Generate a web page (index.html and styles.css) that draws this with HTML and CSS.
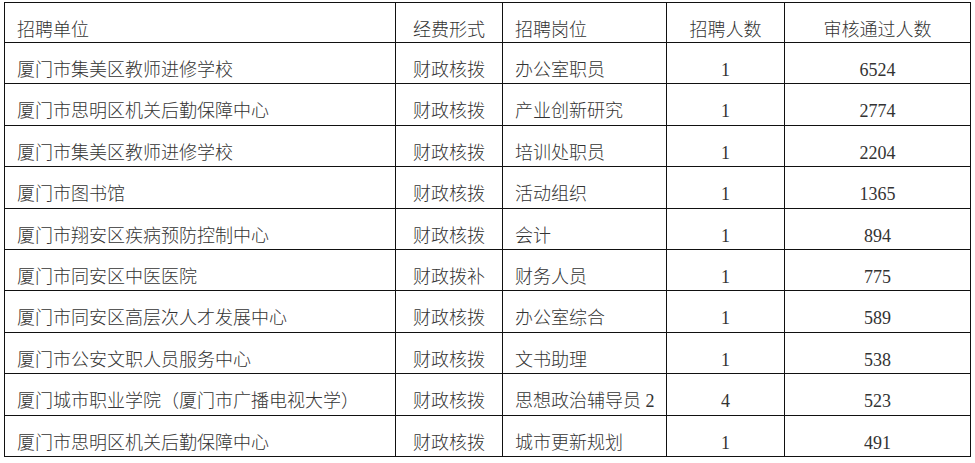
FILE: index.html
```html
<!DOCTYPE html>
<html lang="zh-CN">
<head>
<meta charset="utf-8">
<title>招聘单位</title>
<link rel="stylesheet" href="styles.css">
</head>
<body>
<table class="grid">
  <colgroup>
    <col class="c-unit">
    <col class="c-fund">
    <col class="c-post">
    <col class="c-num">
    <col class="c-pass">
  </colgroup>
  <thead>
    <tr>
      <th class="left">招聘单位</th>
      <th class="center">经费形式</th>
      <th class="left">招聘岗位</th>
      <th class="center">招聘人数</th>
      <th class="center">审核通过人数</th>
    </tr>
  </thead>
  <tbody>
    <tr><td class="left">厦门市集美区教师进修学校</td><td class="center">财政核拨</td><td class="left">办公室职员</td><td class="center">1</td><td class="center">6524</td></tr>
    <tr><td class="left">厦门市思明区机关后勤保障中心</td><td class="center">财政核拨</td><td class="left">产业创新研究</td><td class="center">1</td><td class="center">2774</td></tr>
    <tr><td class="left">厦门市集美区教师进修学校</td><td class="center">财政核拨</td><td class="left">培训处职员</td><td class="center">1</td><td class="center">2204</td></tr>
    <tr><td class="left">厦门市图书馆</td><td class="center">财政核拨</td><td class="left">活动组织</td><td class="center">1</td><td class="center">1365</td></tr>
    <tr><td class="left">厦门市翔安区疾病预防控制中心</td><td class="center">财政核拨</td><td class="left">会计</td><td class="center">1</td><td class="center">894</td></tr>
    <tr><td class="left">厦门市同安区中医医院</td><td class="center">财政拨补</td><td class="left">财务人员</td><td class="center">1</td><td class="center">775</td></tr>
    <tr><td class="left">厦门市同安区高层次人才发展中心</td><td class="center">财政核拨</td><td class="left">办公室综合</td><td class="center">1</td><td class="center">589</td></tr>
    <tr><td class="left">厦门市公安文职人员服务中心</td><td class="center">财政核拨</td><td class="left">文书助理</td><td class="center">1</td><td class="center">538</td></tr>
    <tr><td class="left">厦门城市职业学院（厦门市广播电视大学）</td><td class="center">财政核拨</td><td class="left">思想政治辅导员 2</td><td class="center">4</td><td class="center">523</td></tr>
    <tr><td class="left">厦门市思明区机关后勤保障中心</td><td class="center">财政核拨</td><td class="left">城市更新规划</td><td class="center">1</td><td class="center">491</td></tr>
  </tbody>
</table>
</body>
</html>
```

FILE: styles.css
```css
html, body {
  margin: 0;
  padding: 0;
  background: #ffffff;
}

body {
  padding: 2px 0 0 4px;
  font-family: "Liberation Serif", "Noto Sans CJK SC", serif;
  font-size: 18px;
  color: #333333;
}

.grid {
  border-collapse: collapse;
  table-layout: fixed;
  width: 966px;
  height: 455px;
}

.c-unit { width: 391px; }
.c-fund { width: 107px; }
.c-post { width: 164px; }
.c-num  { width: 118px; }
.c-pass { width: 186px; }

.grid th,
.grid td {
  border: 1px solid #111111;
  padding: 17px 12px 2px;
  line-height: 20px;
  font-weight: 300;
  vertical-align: top;
  white-space: nowrap;
  overflow: hidden;
}

.left { text-align: left; }
.center { text-align: center; }
```
